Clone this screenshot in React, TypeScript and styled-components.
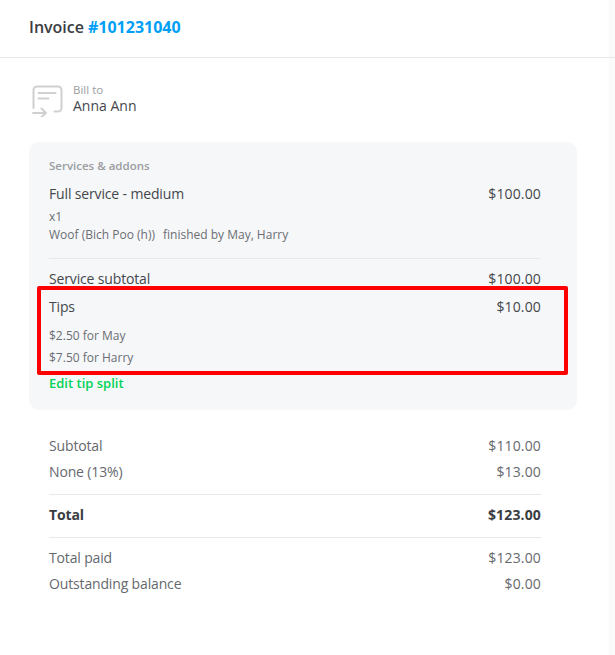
import React from "react";
import styled, { createGlobalStyle } from "styled-components";

const Global = createGlobalStyle`
  html, body { margin: 0; padding: 0; background: #fff; }
  body { font-family: "Open Sans", "Noto Sans", sans-serif; color: #3a3d42; }
`;
const Page = styled.div`
  position: relative; width: 615px; height: 655px; overflow: hidden;
  display: flex; background: #fafafa;
`;
const Panel = styled.main`
  width: 609px; height: 655px; background: #fff; flex: none;
`;
const Header = styled.header`
  height: 57px; box-sizing: content-box; border-bottom: 1px solid #e8e8e8; padding-left: 29px;
  display: flex; align-items: flex-start; padding-top: 0;
  font-size: 16px; line-height: 54px; font-weight: 600; color: #3a3d42; gap: 4px; margin-right: -6px;
`;
const InvoiceNo = styled.span`
  color: #009ff5; font-weight: 700;
`;
const Body = styled.div`
  padding: 24px 32px 0 29px;
`;
const BillTo = styled.section`
  display: flex; align-items: flex-start; gap: 9px; padding-left: 3px; height: 36px;
`;
const IconWrap = styled.div`
  margin-top: 3px; height: 32px;
`;
const BillText = styled.div`
  display: flex; flex-direction: column; margin-top: 1px;
`;
const BillLabel = styled.span`
  font-size: 11.5px; line-height: 14px; color: #9b9da1;
`;
const BillName = styled.span`
  font-size: 14px; line-height: 18px; color: #44474c;
`;
const Card = styled.section`
  margin-top: 24px; height: 268px; box-sizing: border-box; background: #f6f7f9;
  border-radius: 10px; padding: 17px 36px 0 20px;
`;
const CardTitle = styled.div`
  font-size: 11.5px; line-height: 14px; font-weight: 600; color: #9a9ca0;
`;
const Row = styled.div<{ $top?: number; $bold?: boolean; $muted?: boolean }>`
  display: flex; justify-content: space-between; margin-top: ${(p) => p.$top ?? 0}px;
  font-size: 14px; line-height: 19px;
  font-weight: ${(p) => (p.$bold ? 700 : 400)};
  color: ${(p) => (p.$bold ? "#3a3d42" : p.$muted ? "#66696e" : "#44474c")};
`;
const Label = styled.span`
  letter-spacing: -0.15px;
`;
const Amount = styled.span`
  letter-spacing: 0.15px;
`;
const Small = styled.div<{ $top?: number }>`
  font-size: 12px; line-height: 15px; color: #6b6e73; margin-top: ${(p) => p.$top ?? 0}px;
`;
const Gap = styled.span`
  margin-left: 8px;
`;
const Rule = styled.hr<{ $top: number }>`
  border: 0; border-top: 1px solid #e8e9eb; margin: ${(p) => p.$top}px 0 0;
`;
const EditLink = styled.div`
  font-size: 13px; line-height: 18px; font-weight: 600; color: #00d356; margin-top: 9px;
`;
const Totals = styled.section`
  padding: 26px 36px 0 20px;
`;
const Highlight = styled.div`
  position: absolute; left: 37px; top: 286px; width: 531px; height: 89px;
  box-sizing: border-box; border: 4px solid #fe0000; border-radius: 2px; pointer-events: none;
`;

const BillIcon = () => (
  <svg width="32" height="32" viewBox="0 0 32 32" fill="none" stroke="#cfd0d2" strokeWidth="2" strokeLinecap="round" strokeLinejoin="round">
    <path d="M1.5 23V5a3.5 3.5 0 0 1 3.5-3.5h21a3.5 3.5 0 0 1 3.5 3.5v18a3.5 3.5 0 0 1-3.5 3.5h-3.5" />
    <path d="M6.5 8h17M6.5 13.5h10" />
    <path d="M1 28h13M9.5 23.5 14 28l-4.5 4" />
  </svg>
);

export default function App() {
  return (
    <Page>
      <Global />
      <Panel>
        <Header>
          Invoice <InvoiceNo>#101231040</InvoiceNo>
        </Header>
        <Body>
          <BillTo>
            <IconWrap><BillIcon /></IconWrap>
            <BillText>
              <BillLabel>Bill to</BillLabel>
              <BillName>Anna Ann</BillName>
            </BillText>
          </BillTo>
          <Card>
            <CardTitle>Services &amp; addons</CardTitle>
            <Row $top={11}><Label>Full service - medium</Label><Amount>$100.00</Amount></Row>
            <Small $top={6}>x1</Small>
            <Small $top={3}>Woof (Bich Poo (h))<Gap>finished by May, Harry</Gap></Small>
            <Rule $top={16} />
            <Row $top={10}><Label>Service subtotal</Label><Amount>$100.00</Amount></Row>
            <Row $top={9}><Label>Tips</Label><Amount>$10.00</Amount></Row>
            <Small $top={12}>$2.50 for May</Small>
            <Small $top={7}>$7.50 for Harry</Small>
            <EditLink>Edit tip split</EditLink>
          </Card>
          <Totals>
            <Row $muted><Label>Subtotal</Label><Amount>$110.00</Amount></Row>
            <Row $muted $top={7}><Label>None (13%)</Label><Amount>$13.00</Amount></Row>
            <Rule $top={13} />
            <Row $bold $top={10}><Label>Total</Label><Amount>$123.00</Amount></Row>
            <Rule $top={13} />
            <Row $muted $top={10}><Label>Total paid</Label><Amount>$123.00</Amount></Row>
            <Row $muted $top={7}><Label>Outstanding balance</Label><Amount>$0.00</Amount></Row>
          </Totals>
        </Body>
      </Panel>
      <Highlight />
    </Page>
  );
}
